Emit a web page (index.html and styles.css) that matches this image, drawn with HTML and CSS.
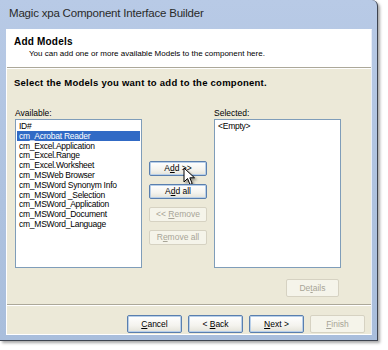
FILE: index.html
```html
<!DOCTYPE html>
<html>
<head>
<meta charset="utf-8">
<link rel="stylesheet" href="styles.css">
</head>
<body>
<div class="window">
  <div class="titlebar">Magic xpa Component Interface Builder</div>
  <div class="client">
    <div class="header">
      <div class="h-title">Add Models</div>
      <div class="h-sub">You can add one or more available Models to the component here.</div>
    </div>
    <div class="body">
      <div class="instr">Select the Models you want to add to the component.</div>
      <div class="lists">
        <div class="col">
          <div class="label">Available:</div>
          <div class="listbox">
            <div class="item">ID#</div>
            <div class="item sel">cm_Acrobat Reader</div>
            <div class="item">cm_Excel.Application</div>
            <div class="item">cm_Excel.Range</div>
            <div class="item">cm_Excel.Worksheet</div>
            <div class="item">cm_MSWeb Browser</div>
            <div class="item">cm_MSWord Synonym Info</div>
            <div class="item">cm_MSWord _Selection</div>
            <div class="item">cm_MSWord_Application</div>
            <div class="item">cm_MSWord_Document</div>
            <div class="item">cm_MSWord_Language</div>
          </div>
        </div>
        <div class="btncol">
          <div class="btn focus add">A<u>d</u>d &gt;&gt;
            <svg class="cursor" width="14" height="20" viewBox="0 0 14 20"><path d="M1 1 L1 15 L4.5 11.5 L7 17.5 L9.2 16.5 L6.8 10.8 L11.5 10.8 Z" fill="#fff" stroke="#000" stroke-width="1"/></svg>
          </div>
          <div class="btn focus">A<u>d</u>d all</div>
          <div class="btn dis">&lt;&lt; <u>R</u>emove</div>
          <div class="btn dis">R<u>e</u>move all</div>
        </div>
        <div class="col">
          <div class="label">Selected:</div>
          <div class="listbox">
            <div class="item">&lt;Empty&gt;</div>
          </div>
          <div class="details-row"><div class="btn dis details">De<u>t</u>ails</div></div>
        </div>
      </div>
      <div class="sep"></div>
      <div class="footer">
        <div class="btn big focus"><u>C</u>ancel</div>
        <div class="btn big focus">&lt; <u>B</u>ack</div>
        <div class="btn big focus"><u>N</u>ext &gt;</div>
        <div class="btn big dis"><u>F</u>inish</div>
      </div>
    </div>
  </div>
</div>
</body>
</html>
```

FILE: styles.css
```css
html, body {
  margin: 0;
  padding: 0;
  background: #ffffff;
  width: 388px;
  height: 350px;
  overflow: hidden;
}
body {
  font-family: "Liberation Sans", Arial, sans-serif;
}
.window {
  width: 378px;
  height: 341px;
  box-sizing: border-box;
  background: #b3c6e2;
  background-image: linear-gradient(180deg, #b8cae6 0%, #aec2df 60%, #a9bedc 100%);
  border-right: 1px solid #3e4450;
  border-bottom: 1px solid #3e4450;
  border-radius: 0 6px 0 0;
  box-shadow: 2px 2px 3px rgba(0,0,0,0.35);
  padding: 0 5px 5px 6px;
  display: flex;
  flex-direction: column;
}
.titlebar {
  height: 29px;
  box-sizing: border-box;
  padding: 7px 0 0 3px;
  font-size: 11.5px;
  color: #2a2a2a;
  letter-spacing: -0.2px;
}
.client {
  flex: 1;
  display: flex;
  flex-direction: column;
  border: 1px solid #ffffff;
  border-right-color: #e8eef8;
  background: #ece9d8;
}
.header {
  height: 38px;
  background: #ffffff;
  border-bottom: 1px solid #aca899;
  box-shadow: 0 1px 0 #ffffff;
  box-sizing: border-box;
  padding: 6px 0 0 7px;
}
.h-title {
  font-weight: bold;
  font-size: 10px;
  color: #000;
  letter-spacing: 0.2px;
}
.h-sub {
  font-size: 8px;
  margin: 2px 0 0 15px;
  color: #000;
}
.body {
  flex: 1;
  display: flex;
  flex-direction: column;
  padding: 9px 0 0 0;
}
.instr {
  font-weight: bold;
  font-size: 9.5px;
  color: #000;
  padding-left: 7px;
  letter-spacing: 0.25px;
}
.lists {
  display: grid;
  grid-template-columns: 127px 58px 127px;
  column-gap: 7px;
  margin: 20px 0 0 8px;
  align-items: start;
}
.col {
  display: flex;
  flex-direction: column;
}
.label {
  font-size: 8.5px;
  color: #000;
  height: 11px;
  line-height: 11px;
}
.listbox {
  height: 149px;
  box-sizing: border-box;
  background: #ffffff;
  border: 1px solid #7f9db9;
  padding: 1px 1px;
}
.item {
  font-size: 8.5px;
  height: 9.8px;
  line-height: 10px;
  padding-left: 2px;
  color: #000;
  white-space: nowrap;
  letter-spacing: -0.25px;
}
.item.sel {
  background: #316ac5;
  color: #fff;
}
.btncol {
  display: flex;
  flex-direction: column;
  gap: 8px;
  padding-top: 53px;
}
.btn {
  position: relative;
  box-sizing: border-box;
  height: 15px;
  border: 1px solid #003c74;
  border-radius: 2px;
  background: linear-gradient(180deg, #ffffff 0%, #f4f3ee 60%, #e3e2d8 100%);
  font-size: 8.5px;
  line-height: 13px;
  text-align: center;
  color: #000;
  white-space: nowrap;
}
.btn.focus {
  border-color: #5a7fae;
  box-shadow: inset 0 0 0 1px #b8cfe9;
}
.btn.dis {
  border-color: #d6d2c2;
  color: #a8a597;
  background: #f5f4ea;
  box-shadow: none;
}
.btn u {
  text-decoration: underline;
}
.cursor {
  position: absolute;
  left: 33px;
  top: 5px;
  filter: drop-shadow(2px 2px 1px rgba(0,0,0,0.35));
}
.details-row {
  display: flex;
  justify-content: flex-end;
  margin-top: 11px;
  padding-right: 2px;
}
.btn.details {
  width: 53px;
  height: 18px;
  line-height: 16px;
}
.sep {
  margin-top: 7px;
  height: 0;
  border-top: 1px solid #aca899;
  border-bottom: 1px solid #ffffff;
}
.footer {
  display: flex;
  justify-content: flex-end;
  gap: 6px;
  padding: 9px 6px 0 0;
}
.btn.big {
  width: 55px;
  height: 18px;
  line-height: 16px;
  font-size: 8.5px;
}
```
